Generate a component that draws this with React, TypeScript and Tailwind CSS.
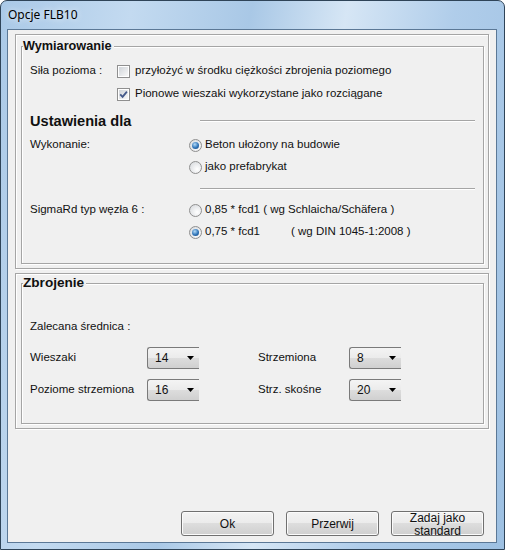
import React from 'react'

function CheckBox({ checked }: { checked?: boolean }) {
  return (
    <span className="flex h-[13px] w-[13px] shrink-0 border border-[#8f8f8f] bg-white p-px">
      <span className="flex flex-1 items-center justify-center bg-[linear-gradient(135deg,#d0d4d9,#f8f8f8)]">
        {checked && (
          <svg width="9" height="9" viewBox="0 0 9 9">
            <path d="M1.2 4.4 L3.6 6.9 L7.9 1.6" stroke="#44598a" strokeWidth="1.8" fill="none" />
          </svg>
        )}
      </span>
    </span>
  )
}

function Radio({ checked }: { checked?: boolean }) {
  return (
    <span className="flex h-[13px] w-[13px] shrink-0 items-center justify-center rounded-full border border-[#8f8f8f] bg-[radial-gradient(circle_at_65%_65%,#ffffff,#d3d6da)]">
      {checked && (
        <span className="h-[7px] w-[7px] rounded-full bg-[radial-gradient(circle_at_40%_35%,#b4dbf8,#2f74b8_55%,#173f70)]" />
      )}
    </span>
  )
}

function Combo({ value }: { value: string }) {
  return (
    <div className="flex h-[22px] w-[52px] items-center justify-between rounded-l-[3px] border-y border-l border-[#7a7a7a] bg-[linear-gradient(#f4f4f4_0%,#ebebeb_50%,#dddddd_50%,#d0d0d0_100%)] pl-[7px] pr-[5px] text-[12px]">
      <span>{value}</span>
      <svg width="7" height="4" viewBox="0 0 7 4">
        <path d="M0 0h7L3.5 4z" fill="#000" />
      </svg>
    </div>
  )
}

function GroupBox({ title, titleClass, className, children }: { title: string; titleClass: string; className?: string; children: React.ReactNode }) {
  return (
    <div className={`border border-[#a5a5a5] shadow-[inset_1px_1px_0_#fff,1px_1px_0_#fff] ${className ?? ''}`}>
      <div className={`-mt-[8px] ml-px w-fit bg-[#f0f0f0] pr-[2px] font-bold leading-[14px] ${titleClass}`}>{title}</div>
      {children}
    </div>
  )
}

function Separator() {
  return <div className="h-px flex-1 bg-[#a5a5a5] shadow-[0_1px_0_#fff]" />
}

const btn =
  'h-[25px] w-[93px] rounded-[3px] border border-[#707070] bg-[linear-gradient(#f3f3f3_0%,#ebebeb_50%,#dddddd_50%,#cfcfcf_100%)] text-[12px] shadow-[inset_0_0_0_1px_#fbfbfb]'

export default function App() {
  return (
    <div className="h-[550px] w-[505px] bg-white font-['Liberation_Sans',Arial,sans-serif] text-[11.5px] text-[#111]">
      <div className="flex h-[550px] w-[505px] flex-col rounded-t-[7px] border border-[#2f4458] bg-[linear-gradient(100deg,#aac9e7_0%,#c3daf0_22%,#a9c8e6_42%,#d6e6f5_58%,#b0cdea_76%,#9dc0e2_100%)]">
        <div className="flex h-[28px] items-center pl-[7px] font-['Noto_Sans',sans-serif] text-[12px] text-black [text-shadow:0_0_6px_#fff]">
          Opcje FLB10
        </div>
        <div className="mb-[6px] ml-[6px] mr-[7px] flex flex-1 flex-col border border-[#5b7896] bg-[#f0f0f0] px-[7px] pt-[4px]">
          {/* Wymiarowanie */}
          <div className="h-[235px] border border-[#a5a5a5] pl-[5px] pr-[4px] pt-[11px] shadow-[inset_1px_1px_0_#fff,1px_1px_0_#fff]">
            <GroupBox title="Wymiarowanie" titleClass="text-[12.7px]" className="pb-[20px]">
              <div className="mt-[7px] flex h-[22px] items-center pl-[8px]">
                <span className="w-[87px]">Siła pozioma :</span>
                <CheckBox />
                <span className="ml-[5px]">przyłożyć w środku ciężkości zbrojenia poziomego</span>
              </div>
              <div className="mt-px flex h-[22px] items-center pl-[95px]">
                <CheckBox checked />
                <span className="ml-[5px]">Pionowe wieszaki wykorzystane jako rozciągane</span>
              </div>
              <div className="mt-[6px] flex h-[22px] items-center pl-[8px] pr-[8px]">
                <span className="w-[170px] text-[14.6px] font-bold">Ustawienia dla</span>
                <div className="mb-[4px] flex flex-1">
                  <Separator />
                </div>
              </div>
              <div className="mt-px flex h-[22px] items-center pl-[8px]">
                <span className="w-[159px]">Wykonanie:</span>
                <Radio checked />
                <span className="ml-[3px]">Beton ułożony na budowie</span>
              </div>
              <div className="flex h-[22px] items-center pl-[167px]">
                <Radio />
                <span className="ml-[3px]">jako prefabrykat</span>
              </div>
              <div className="flex h-[21px] items-center pl-[178px] pr-[8px]">
                <Separator />
              </div>
              <div className="flex h-[22px] items-center pl-[8px]">
                <span className="w-[159px]">SigmaRd typ węzła 6 :</span>
                <Radio />
                <span className="ml-[3px]">0,85 * fcd1 ( wg Schlaicha/Schäfera )</span>
              </div>
              <div className="flex h-[22px] items-center pl-[167px]">
                <Radio checked />
                <span className="ml-[3px] w-[86px]">0,75 * fcd1</span>
                <span>( wg DIN 1045-1:2008 )</span>
              </div>
            </GroupBox>
          </div>

          {/* Zbrojenie */}
          <div className="mt-[4px] h-[156px] border border-[#a5a5a5] pl-[5px] pr-[4px] pt-[9px] shadow-[inset_1px_1px_0_#fff,1px_1px_0_#fff]">
            <GroupBox title="Zbrojenie" titleClass="text-[13.6px]" className="pb-[22px]">
              <div className="mt-[26px] flex h-[22px] items-center pl-[8px]">Zalecana średnica :</div>
              <div className="mt-[9px] flex h-[22px] items-center pl-[8px]">
                <span className="w-[117px]">Wieszaki</span>
                <Combo value="14" />
                <span className="ml-[59px] w-[91px]">Strzemiona</span>
                <Combo value="8" />
              </div>
              <div className="mt-[10px] flex h-[22px] items-center pl-[8px]">
                <span className="w-[117px]">Poziome strzemiona</span>
                <Combo value="16" />
                <span className="ml-[59px] w-[91px]">Strz. skośne</span>
                <Combo value="20" />
              </div>
            </GroupBox>
          </div>

          {/* Buttons */}
          <div className="mt-auto flex justify-end gap-[12px] pb-[6px] pr-[5px]">
            <button className={btn}>Ok</button>
            <button className={btn}>Przerwij</button>
            <button className={`${btn} leading-[13px]`}>
              Zadaj jako
              <br />
              standard
            </button>
          </div>
        </div>
      </div>
    </div>
  )
}
